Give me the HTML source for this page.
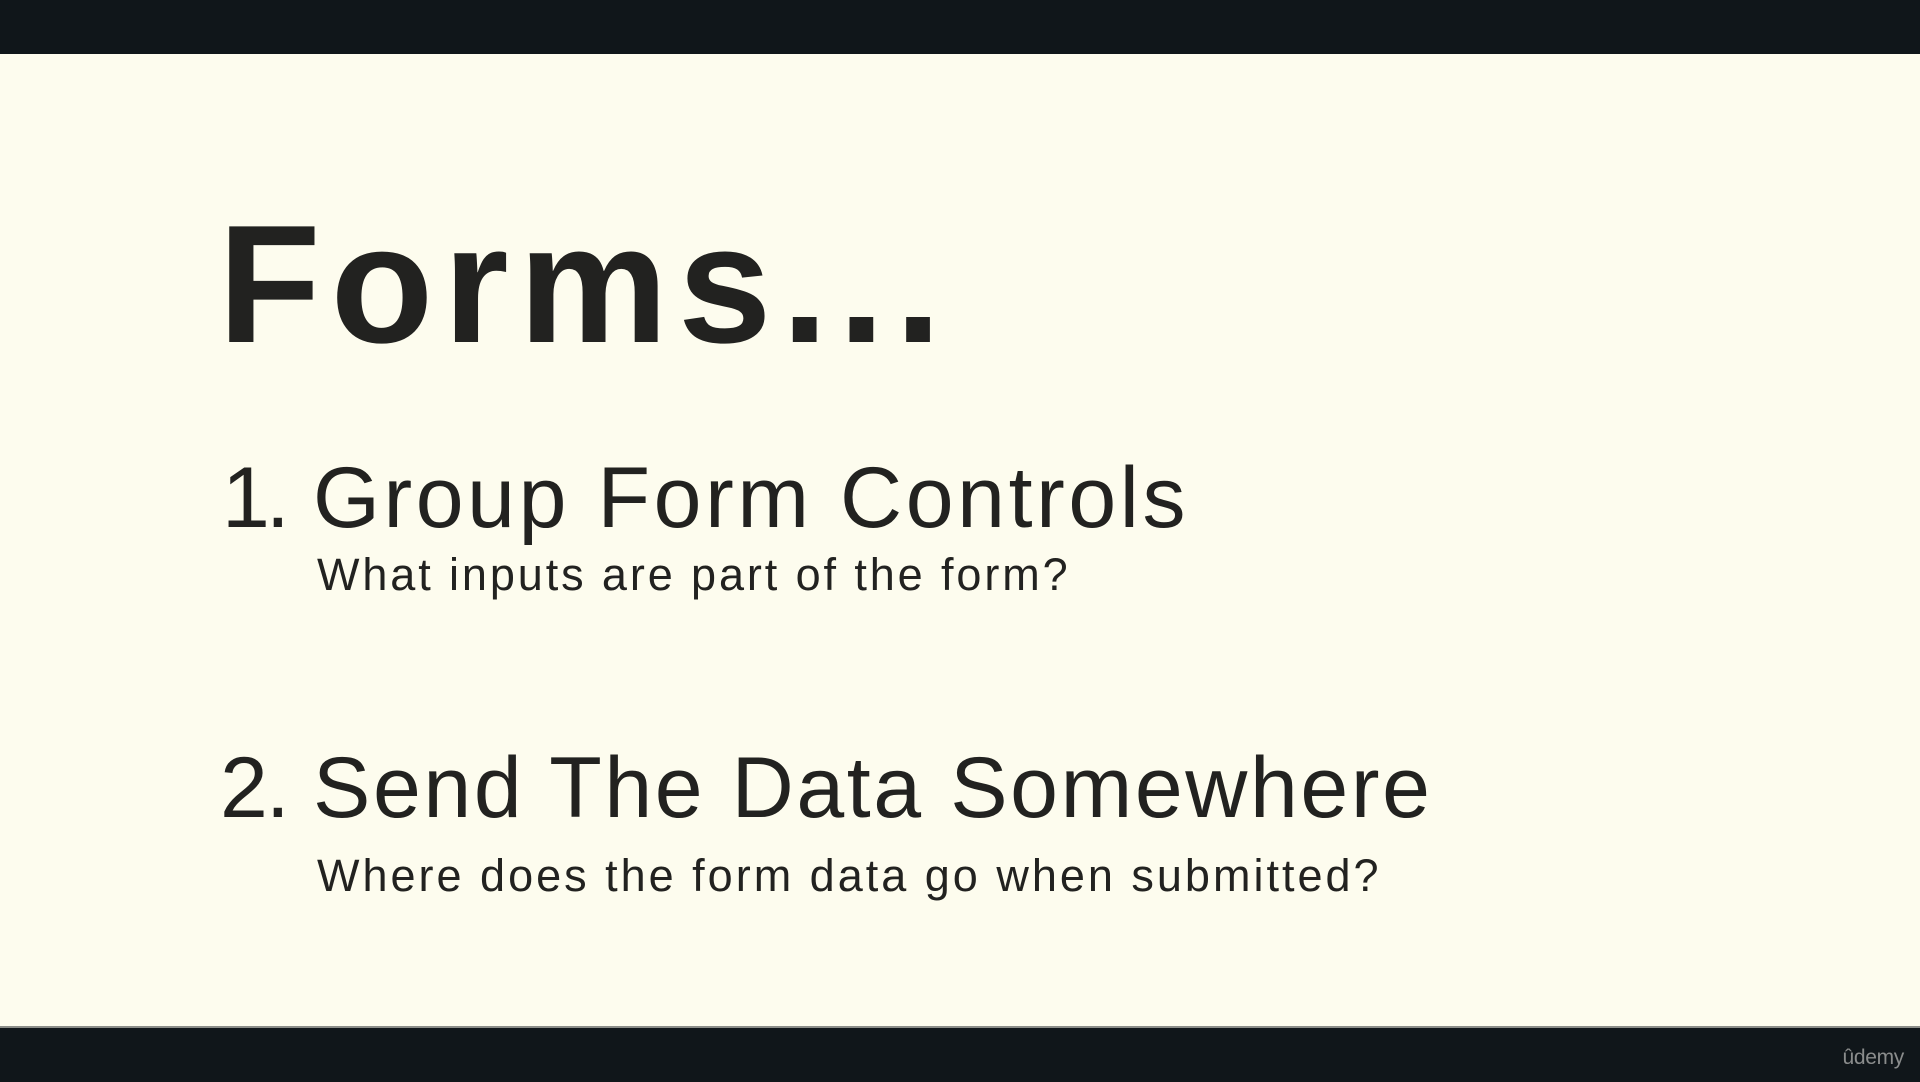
<!DOCTYPE html>
<html><head><meta charset="utf-8"><style>
html,body{margin:0;padding:0;width:1920px;height:1080px;overflow:hidden;background:#fdfcee;font-family:"Liberation Sans",sans-serif;color:#222220}
.top{position:absolute;left:0;top:0;width:1920px;height:54px;background:#10161a}
.bot{position:absolute;left:0;top:1026px;width:1920px;height:54px;background:#10161a;border-top:2px solid #8b8d88}
.t{position:absolute;white-space:nowrap;line-height:1}
.logo{position:absolute;right:16px;top:1046px;color:#8a8c8c;font-size:21px;letter-spacing:-0.3px}
</style></head><body>
<div class="top"></div>
<div class="t" style="left:218px;top:200px;font-size:168px;font-weight:bold;letter-spacing:10px">Forms...</div>
<div class="t" style="left:222px;top:455px;font-size:86px;letter-spacing:-4px">1.</div>
<div class="t" style="left:313px;top:455px;font-size:86px;letter-spacing:3.6px">Group Form Controls</div>
<div class="t" style="left:317px;top:552px;font-size:45px;letter-spacing:2.9px">What inputs are part of the form?</div>
<div class="t" style="left:220px;top:745px;font-size:86px;letter-spacing:-2px">2.</div>
<div class="t" style="left:313px;top:745px;font-size:86px;letter-spacing:2.6px">Send The Data Somewhere</div>
<div class="t" style="left:317px;top:853px;font-size:45px;letter-spacing:3px">Where does the form data go when submitted?</div>
<div class="bot"></div>
<div class="logo">ûdemy</div>
</body></html>
